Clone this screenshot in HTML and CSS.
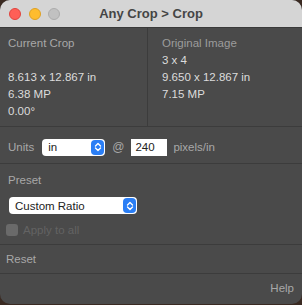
FILE: index.html
```html
<!DOCTYPE html>
<html>
<head>
<meta charset="utf-8">
<link rel="stylesheet" href="styles.css">
</head>
<body>
<div class="window">
  <div class="titlebar">
    <div class="lights">
      <span class="light red"></span>
      <span class="light yellow"></span>
      <span class="light gray"></span>
    </div>
    <div class="title">Any Crop &gt; Crop</div>
  </div>
  <div class="info">
    <div class="col left">
      <div class="label">Current Crop</div>
      <div class="val">&nbsp;</div>
      <div class="val">8.613 x 12.867 in</div>
      <div class="val">6.38 MP</div>
      <div class="val">0.00°</div>
    </div>
    <div class="col right">
      <div class="label">Original Image</div>
      <div class="val">3 x 4</div>
      <div class="val">9.650 x 12.867 in</div>
      <div class="val">7.15 MP</div>
    </div>
  </div>
  <div class="units">
    <span class="label">Units</span>
    <div class="popup small"><span>in</span><span class="stepper"><svg width="8" height="10" viewBox="0 0 8 10"><path d="M1.5 4 L4 1.5 L6.5 4 M1.5 6 L4 8.5 L6.5 6" fill="none" stroke="#fff" stroke-width="1.4" stroke-linecap="round" stroke-linejoin="round"/></svg></span></div>
    <span class="label at">@</span>
    <div class="field">240</div>
    <span class="label">pixels/in</span>
  </div>
  <div class="preset">
    <div class="label">Preset</div>
    <div class="popup wide"><span>Custom Ratio</span><span class="stepper"><svg width="8" height="10" viewBox="0 0 8 10"><path d="M1.5 4 L4 1.5 L6.5 4 M1.5 6 L4 8.5 L6.5 6" fill="none" stroke="#fff" stroke-width="1.4" stroke-linecap="round" stroke-linejoin="round"/></svg></span></div>
    <div class="check"><span class="box"></span><span class="dim">Apply to all</span></div>
  </div>
  <div class="reset"><span class="label">Reset</span></div>
  <div class="help"><span class="label">Help</span></div>
</div>
</body>
</html>
```
FILE: styles.css
```css
* { box-sizing: border-box; }
html, body { margin: 0; padding: 0; }
body {
  background: #3a2a22;
  width: 302px;
  height: 305px;
  font-family: "Liberation Sans", Arial, sans-serif;
  font-size: 11.5px;
}
.window {
  width: 302px;
  height: 304px;
  background: #4a4a4a;
  border-radius: 10px;
  overflow: hidden;
  display: flex;
  flex-direction: column;
}
.titlebar {
  height: 28px;
  background: #d5d5d5;
  position: relative;
  display: flex;
  align-items: center;
  justify-content: center;
  border-bottom: 1px solid #3a3a3a;
}
.lights {
  position: absolute;
  left: 9px;
  top: 8px;
  display: flex;
  gap: 7.5px;
}
.light {
  width: 12px;
  height: 12px;
  border-radius: 50%;
  display: block;
}
.red { background: #fe5f57; border: 0.5px solid #e0443e; }
.yellow { background: #febc2e; border: 0.5px solid #dea123; }
.gray { background: #c1c1c1; border: 0.5px solid #acacac; }
.title {
  font-weight: bold;
  font-size: 13px;
  color: #454545;
}
.label { color: #a8a8a8; }
.val { color: #dcdcdc; }
.info {
  display: grid;
  grid-template-columns: 148px 1fr;
  height: 99px;
  border-bottom: 1px solid #3c3c3c;
  line-height: 17px;
}
.col { padding-top: 7px; }
.left { padding-left: 8px; border-right: 1px solid #3c3c3c; }
.right { padding-left: 14px; }
.right .label { color: #9c9c9c; }
.units {
  height: 37px;
  display: flex;
  align-items: center;
  padding-left: 8px;
  padding-top: 4px;
  border-bottom: 1px solid #3c3c3c;
}
.popup {
  background: #fff;
  border-radius: 4px;
  height: 17px;
  display: flex;
  align-items: center;
  justify-content: space-between;
  padding: 0 1px 0 6px;
  color: #222;
  font-size: 11.5px;
}
.popup.small { width: 63px; margin-left: 8px; }
.popup.wide { width: 128px; margin-left: 1px; margin-top: 11px; }
.stepper {
  width: 13px;
  height: 15px;
  background: #2a7ef5;
  border-radius: 4px;
  display: flex;
  align-items: center;
  justify-content: center;
}
.at { margin: 0 7px 0 7px; font-size: 12px; }
.field {
  width: 36px;
  height: 17px;
  background: #fff;
  color: #222;
  padding-left: 4px;
  line-height: 17px;
  margin-right: 6px;
}
.preset {
  height: 81px;
  padding: 10px 0 0 8px;
  border-bottom: 1px solid #3c3c3c;
}
.check {
  display: flex;
  align-items: center;
  margin-top: 10px;
  margin-left: -2px;
}
.box {
  width: 12px;
  height: 12px;
  border-radius: 3px;
  background: #6a6a6a;
  margin-right: 5px;
}
.dim { color: #636363; }
.reset {
  height: 29px;
  display: flex;
  align-items: center;
  padding-left: 6px;
  border-bottom: 1px solid #3c3c3c;
}
.help {
  flex: 1;
  display: flex;
  align-items: center;
  justify-content: flex-end;
  padding-right: 8px;
  padding-bottom: 2px;
}
```
